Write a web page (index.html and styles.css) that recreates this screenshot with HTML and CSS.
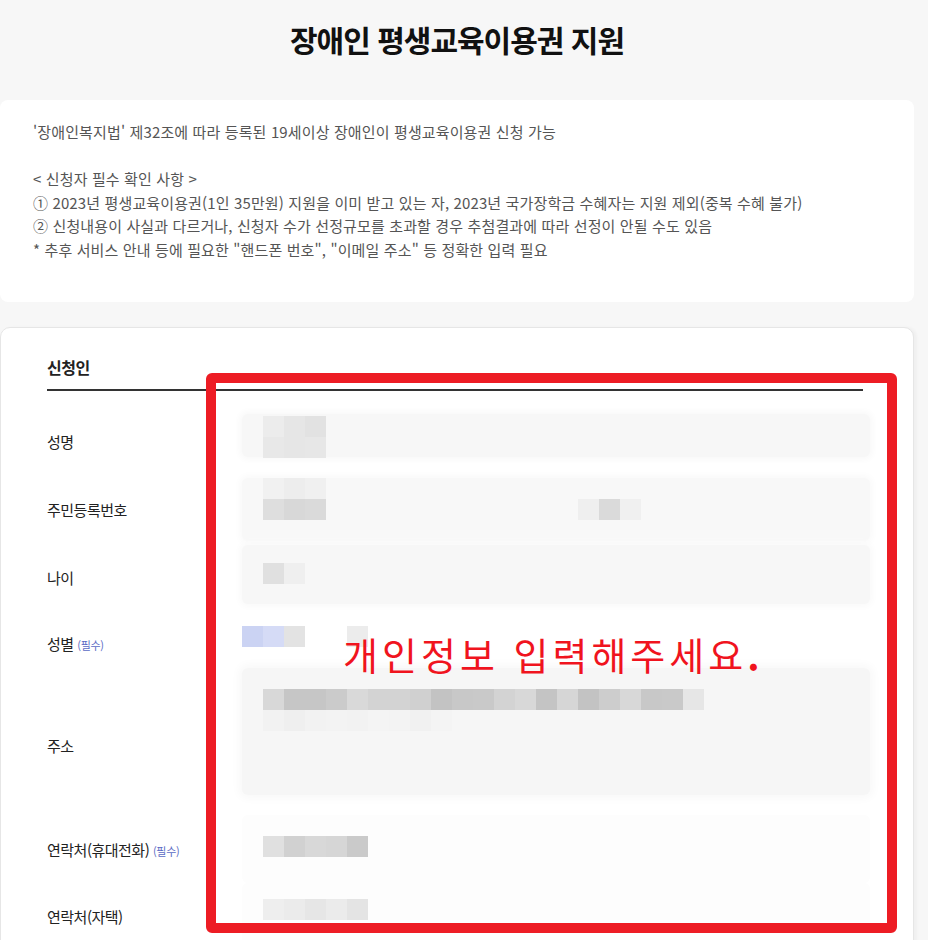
FILE: index.html
```html
<!DOCTYPE html>
<html lang="ko">

<head>
    <meta charset="UTF-8">
    <meta name="viewport" content="width=device-width, initial-scale=1.0">
    <title>장애인 평생교육이용권 지원</title>
    <link rel="stylesheet" href="styles.css">
</head>

<body>
    <div class="page">
        <header class="page-title">
            <h1>장애인 평생교육이용권 지원</h1>
        </header>

        <section class="notice">
            <p>'장애인복지법' 제32조에 따라 등록된 19세이상 장애인이 평생교육이용권 신청 가능</p>
            <p class="blank">&nbsp;</p>
            <p>&lt; 신청자 필수 확인 사항 &gt;</p>
            <p>① 2023년 평생교육이용권(1인 35만원) 지원을 이미 받고 있는 자, 2023년 국가장학금 수혜자는 지원 제외(중복 수혜 불가)</p>
            <p>② 신청내용이 사실과 다르거나, 신청자 수가 선정규모를 초과할 경우 추첨결과에 따라 선정이 안될 수도 있음</p>
            <p>* 추후 서비스 안내 등에 필요한 "핸드폰 번호", "이메일 주소" 등 정확한 입력 필요</p>
        </section>

        <section class="form-card">
            <h2 class="form-title">신청인</h2>

            <div class="row row-name">
                <div class="label">성명</div>
                <div class="field">
                    <div class="cells">
                        <span style="background:#ececec"></span><span style="background:#e6e6e6"></span><span style="background:#e2e2e2"></span>
                    </div>
                    <div class="cells">
                        <span style="background:#e8e8e8"></span><span style="background:#e6e6e6"></span><span style="background:#e7e7e7"></span>
                    </div>
                </div>
            </div>

            <div class="row row-id">
                <div class="label">주민등록번호</div>
                <div class="field">
                    <div class="cells">
                        <span style="background:#f1f1f1"></span><span style="background:#ededed"></span><span style="background:#f0f0f0"></span>
                    </div>
                    <div class="cells split">
                        <div class="cells">
                            <span style="background:#dedede"></span><span style="background:#d8d8d8"></span><span style="background:#dadada"></span>
                        </div>
                        <div class="cells">
                            <span style="background:#efefef"></span><span style="background:#dadada"></span><span style="background:#f0f0f0"></span>
                        </div>
                    </div>
                </div>
            </div>

            <div class="row row-age">
                <div class="label">나이</div>
                <div class="field">
                    <div class="cells">
                        <span style="background:#e0e0e0"></span><span style="background:#efefef"></span>
                    </div>
                </div>
            </div>

            <div class="row row-gender">
                <div class="label">성별 <small class="req">(필수)</small></div>
                <div class="field">
                    <div class="cells">
                        <span style="background:#cbd3f3"></span><span style="background:#d5dbf6"></span><span style="background:#e3e3e3"></span>
                        <span class="gap"></span><span class="gap"></span>
                        <span style="background:#ececec"></span>
                    </div>
                </div>
            </div>

            <div class="row row-addr">
                <div class="label">주소</div>
                <div class="field">
                    <div class="cells">
                        <span style="background:#d8d8d8"></span><span style="background:#c6c6c6"></span><span style="background:#c6c6c6"></span>
                        <span style="background:#cbcbcb"></span><span style="background:#d9d9d9"></span><span style="background:#d3d3d3"></span>
                        <span style="background:#d3d3d3"></span><span style="background:#d0d0d0"></span><span style="background:#c3c3c3"></span>
                        <span style="background:#c8c8c8"></span><span style="background:#c9c9c9"></span><span style="background:#d3d3d3"></span>
                        <span style="background:#d8d8d8"></span><span style="background:#c4c4c4"></span><span style="background:#d6d6d6"></span>
                        <span style="background:#c3c3c3"></span><span style="background:#cdcdcd"></span><span style="background:#d8d8d8"></span>
                        <span style="background:#c8c8c8"></span><span style="background:#c9c9c9"></span><span style="background:#e6e6e6"></span>
                    </div>
                    <div class="cells faint">
                        <span style="background:#f0f0f0"></span><span style="background:#ebebeb"></span><span style="background:#f1f1f1"></span>
                        <span style="background:#f2f2f2"></span><span style="background:#f0f0f0"></span><span style="background:#f3f3f3"></span>
                        <span style="background:#f2f2f2"></span><span style="background:#efefef"></span><span style="background:#f3f3f3"></span>
                    </div>
                </div>
            </div>

            <div class="row row-phone">
                <div class="label">연락처(휴대전화) <small class="req">(필수)</small></div>
                <div class="field">
                    <div class="cells">
                        <span style="background:#e0e0e0"></span><span style="background:#d1d1d1"></span><span style="background:#d8d8d8"></span>
                        <span style="background:#d6d6d6"></span><span style="background:#cacaca"></span>
                    </div>
                </div>
            </div>

            <div class="row row-tel">
                <div class="label">연락처(자택)</div>
                <div class="field">
                    <div class="cells">
                        <span style="background:#eeeeee"></span><span style="background:#ebebeb"></span><span style="background:#e6e6e6"></span>
                        <span style="background:#ebebeb"></span><span style="background:#e4e4e4"></span>
                    </div>
                </div>
            </div>
        </section>

        <!-- 캡처 위에 그린 안내 표시 -->
        <div class="annot-box"></div>
        <p class="annot-text">개인정보 입력해주세요<b>.</b></p>
    </div>
</body>

</html>
```

FILE: styles.css
```css
* {
    margin: 0;
    padding: 0;
    box-sizing: border-box;
}

body {
    font-family: 'Noto Sans CJK KR', 'Noto Sans', sans-serif;
    background-color: #f7f7f7;
    color: #222;
    overflow: hidden;
}

.page {
    position: relative;
    width: 914px;
}

.page-title {
    height: 100px;
    padding-top: 19px;
    text-align: center;
}

.page-title h1 {
    font-size: 30px;
    line-height: 40px;
    font-weight: 700;
    letter-spacing: -1px;
    color: #111;
}

.notice {
    background-color: #fff;
    border-radius: 8px;
    padding: 20px 33px 41px;
    color: #555;
    font-size: 15px;
    line-height: 23.5px;
    letter-spacing: 0.13px;
}

.form-card {
    margin-top: 25px;
    background-color: #fff;
    border: 1px solid #e6e6e6;
    border-radius: 10px;
    padding: 27px 50px 0 46px;
    height: 640px;
    box-shadow: 3px 0 3px rgba(0, 0, 0, 0.03);
}

.form-title {
    font-size: 16px;
    font-weight: 700;
    line-height: 24px;
    letter-spacing: -0.5px;
    padding-bottom: 10px;
    border-bottom: 2px solid #333;
    margin-bottom: 16px;
}

.row {
    display: flex;
    height: 68px;
}

.label {
    width: 195px;
    flex-shrink: 0;
    align-self: center;
    font-size: 15px;
    letter-spacing: -0.5px;
}

.req {
    font-size: 11px;
    color: #5b6bc4;
    letter-spacing: -0.3px;
}

.field {
    flex: 1;
    margin-right: -7px;
    border-radius: 6px;
}

.cells {
    display: flex;
}

.cells span {
    display: block;
    width: 21px;
    height: 21px;
}

.cells span.gap {
    background: transparent;
}

.cells.split {
    gap: 252px;
}

.faint {
    opacity: 0.6;
}

.row-name .field {
    margin-top: 7px;
    height: 43px;
    padding: 2px 0 0 21px;
    background-color: #f7f7f7;
    box-shadow: 0 0 6px 3px #f9f9f9;
}

.row-id .field {
    margin-top: 3px;
    height: 63px;
    padding-left: 21px;
    background-color: #f8f8f8;
    box-shadow: 0 0 6px 3px #fafafa;
}

.row-age .field {
    margin-top: 2px;
    height: 59px;
    padding: 18px 0 0 21px;
    background-color: #f7f7f7;
    box-shadow: 0 0 6px 3px #fafafa;
}

.row-gender {
    height: 65px;
}

.row-gender .field {
    padding-top: 15px;
}

.row-addr {
    height: 139px;
}

.row-addr .field {
    margin-top: -8px;
    height: 127px;
    padding: 21px 0 0 21px;
    background-color: #f6f6f6;
    box-shadow: 0 0 8px 4px #f9f9f9;
}

.row-phone .field {
    padding: 21px 0 0 21px;
    background-color: #fdfdfd;
}

.row-tel {
    height: 66px;
}

.row-tel .field {
    padding: 16px 0 0 21px;
    background-color: #fdfdfd;
}

.annot-box {
    position: absolute;
    left: 206px;
    top: 373px;
    width: 691px;
    height: 560px;
    border: 10px solid #ed1c24;
    border-radius: 6px;
}

.annot-text {
    position: absolute;
    left: 343px;
    top: 632px;
    font-size: 38px;
    line-height: 44px;
    letter-spacing: 4px;
    color: #f0141e;
    font-weight: 400;
}

.annot-text b {
    font-weight: 700;
}
```
